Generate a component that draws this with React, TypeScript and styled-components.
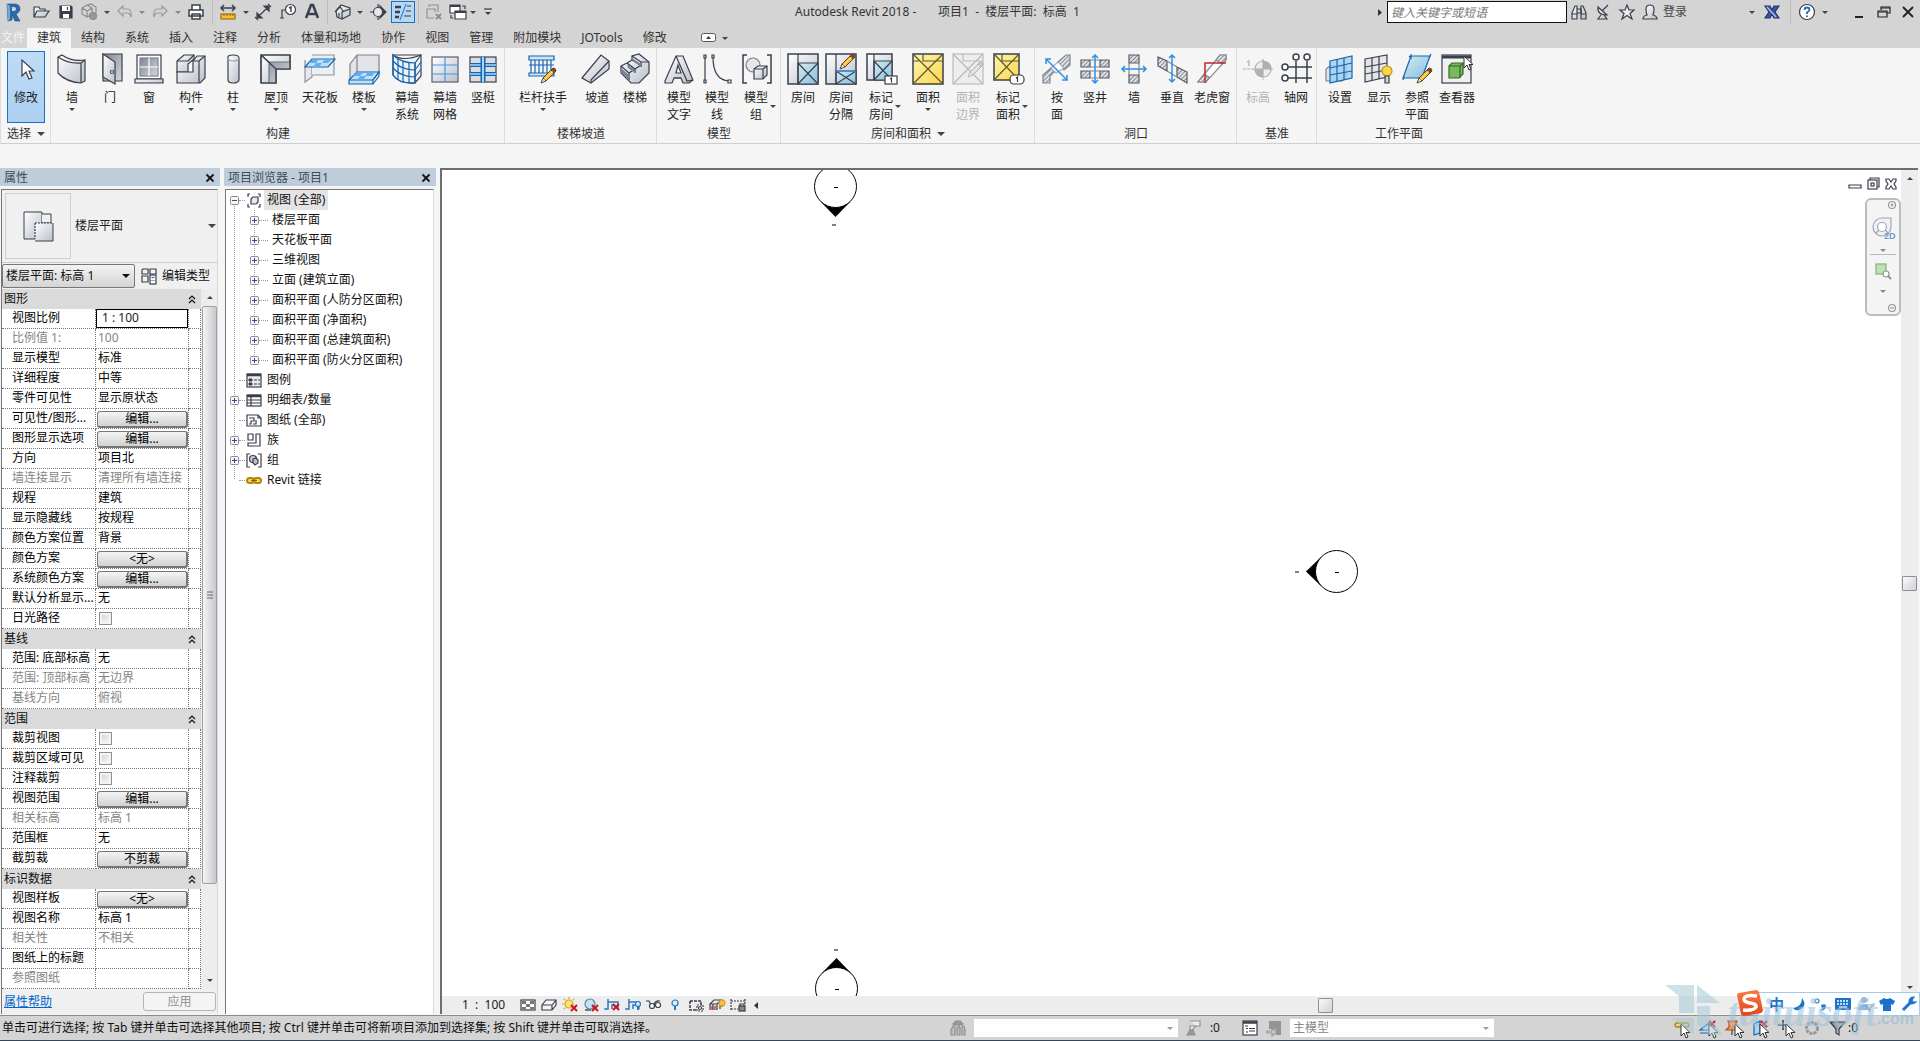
import React from "react";
import styled, { createGlobalStyle, css } from "styled-components";

const INK = "#3a3f4b";
const BLUE = "#1565b0";

const Global = createGlobalStyle`
  *, *::before, *::after { box-sizing: border-box; }
  html, body { margin: 0; padding: 0; }
  body, button, input, select, table {
    font-family: "Noto Sans", "Noto Sans CJK SC", sans-serif;
    font-size: 12px;
    line-height: 16px;
    color: #222;
  }
  button { background: none; border: 0; padding: 0; margin: 0; cursor: default; }
  ul { list-style: none; margin: 0; padding: 0; }
`;

const Window = styled.div`
  position: relative;
  display: flex;
  flex-direction: column;
  height: 100vh;
  overflow: hidden;
  background: #f5f5f5;
  border-bottom: 1px solid #33475c;
`;

/* ---------- shared drawing helpers ---------- */

const Svg = styled.svg`
  display: block;
  flex: none;
  overflow: visible;
`;

type IconProps = { size?: number; children: React.ReactNode };
const Icon = ({ size = 16, children }: IconProps) => (
  <Svg width={size} height={size} viewBox={`0 0 ${size} ${size}`} fill="none" stroke={INK} strokeWidth={1.2} aria-hidden="true">
    {children}
  </Svg>
);

const Caret = ({ color = "#444", size = 6 }: { color?: string; size?: number }) => (
  <Svg width={size} height={size / 2} viewBox="0 0 6 3" aria-hidden="true">
    <path d="M0 0H6L3 3Z" fill={color} />
  </Svg>
);

const Gradients = () => (
  <Svg width="0" height="0" aria-hidden="true">
    <defs>
      <linearGradient id="steel" x1="0" y1="0" x2="1" y2="1">
        <stop offset="0" stopColor="#ffffff" />
        <stop offset="1" stopColor="#b9bfca" />
      </linearGradient>
      <linearGradient id="dark" x1="0" y1="0" x2="1" y2="1">
        <stop offset="0" stopColor="#7d8492" />
        <stop offset="1" stopColor="#d5d8de" />
      </linearGradient>
      <linearGradient id="sky" x1="0" y1="0" x2="1" y2="1">
        <stop offset="0" stopColor="#d3ecf5" />
        <stop offset="1" stopColor="#86bfdb" />
      </linearGradient>
      <linearGradient id="gold" x1="0" y1="0" x2="1" y2="1">
        <stop offset="0" stopColor="#fff3b0" />
        <stop offset="1" stopColor="#fbd84c" />
      </linearGradient>
      <linearGradient id="orange" x1="0" y1="0" x2="0" y2="1">
        <stop offset="0" stopColor="#fb7a45" />
        <stop offset="1" stopColor="#e5421a" />
      </linearGradient>
      <pattern id="hatch" width="3" height="3" patternUnits="userSpaceOnUse" patternTransform="rotate(45)">
        <rect width="3" height="3" fill="#dfe1e5" />
        <path d="M0 0V3" stroke="#6d7480" strokeWidth="1.6" />
      </pattern>
    </defs>
  </Svg>
);

const Pencil = ({ x = 0, y = 0, grey = false }: { x?: number; y?: number; grey?: boolean }) => (
  <g transform={`translate(${x} ${y})`} strokeWidth="1" stroke={grey ? "#b5b5b5" : "#5b4a33"}>
    <path d="M0 15L2 10L5 13Z" fill={grey ? "#eee" : "#f3e0bf"} />
    <path d="M2 10L10 2L13 5L5 13Z" fill={grey ? "#ddd" : "#fbb929"} />
    <path d="M10 2L12 0Q15 0 15 3L13 5Z" fill={grey ? "#ccc" : "#8a4a1c"} />
    <path d="M3.500 11.500L11.500 3.500" stroke={grey ? "#eee" : "#ffe9a8"} />
  </g>
);

const Pointer = ({ x = 0, y = 0 }: { x?: number; y?: number }) => (
  <path transform={`translate(${x} ${y})`} d="M0 0V12L3 9L5 14L7 13L5 8.500H9Z" fill="#fff" stroke="#333" strokeWidth="1" />
);

const RedX = ({ x = 0, y = 0 }: { x?: number; y?: number }) => (
  <path transform={`translate(${x} ${y})`} d="M0 0L6 6M6 0L0 6" stroke="#c8141c" strokeWidth="2" />
);

/* ---------- title bar ---------- */

const TitleBar = styled.header`
  display: flex;
  align-items: center;
  flex: none;
  height: 24px;
  background: #d4d4d4;
`;

const BarButton = styled.button<{ $w: number; $on?: boolean }>`
  display: flex;
  align-items: center;
  justify-content: center;
  flex: none;
  width: ${(p) => p.$w}px;
  height: 22px;
  ${(p) => p.$on && css`
    background: #b7d7f3;
    border: 1px solid #1b6fc0;
  `}
`;

const BarDivider = styled.span<{ $w: number }>`
  flex: none;
  align-self: stretch;
  width: ${(p) => p.$w}px;
  background: linear-gradient(#bdbdbd, #bdbdbd) center / 1px 100% no-repeat;
`;

const WindowTitle = styled.h1`
  flex: 1;
  min-width: 0;
  margin: 0;
  font-size: 12px;
  font-weight: 400;
  line-height: 22px;
  text-align: center;
  white-space: pre;
  overflow: hidden;
  color: #333;
`;

const Search = styled.input`
  flex: none;
  width: 180px;
  height: 22px;
  margin-left: 3px;
  padding: 0 3px;
  border: 1px solid #111;
  background: #fff;
  font-style: italic;
  &::placeholder { color: #777; opacity: 1; }
`;

const LoginButton = styled.button`
  display: flex;
  align-items: center;
  gap: 5px;
  margin-right: 61px;
  padding-left: 3px;
  white-space: nowrap;
  color: #444;
`;

const WindowControls = styled.div`
  display: flex;
  margin-left: 18px;
`;

const qat: [string, number, React.ReactNode, boolean?][] = [
  ["Revit", 26, <Icon key="i"><path d="M2 0H9Q15 0 15 5Q15 8 11 10L15 17H10L7 11V16L3 17Z" fill="#2b6ca8" stroke="#174a7d" strokeWidth="0.600" /><path d="M7 3V7H9Q11 7 11 5Q11 3 9 3Z" fill="#d4d4d4" stroke="none" /><path d="M2 0L5 2V15L3 17Z" fill="#74abd6" stroke="none" /></Icon>],
  ["打开", 30, <Icon key="i"><path d="M1 13V3H6L7 5H12V7M1 13L4 7H16L12 13Z" fill="url(#steel)" /></Icon>],
  ["保存", 20, <Icon key="i"><path d="M2 2H13L14 3V14H2Z" fill={INK} /><path d="M4 2H12V7H4ZM5 10H11V14H5Z" fill="#fff" stroke="none" /><path d="M9.500 3V6" stroke={INK} /></Icon>],
  ["同步", 26, <Icon key="i"><g stroke="#8e8e8e"><path d="M1 4L6 1L11 4V10L6 13L1 10ZM1 4L6 7L11 4M6 7V13M6 1L10 0L15 3V9" /><circle cx="12" cy="12" r="3.500" fill="#999" /></g></Icon>],
  ["", 10, <Caret key="i" />],
  ["放弃", 26, <Icon key="i"><path d="M1 7L6 2V5H11Q15 6 14 13Q13 9 10 9H6V12Z" stroke="#9c9c9c" /></Icon>],
  ["", 8, <Caret key="i" color="#888" />],
  ["重做", 28, <Icon key="i"><path d="M15 7L10 2V5H5Q1 6 2 13Q3 9 6 9H10V12Z" stroke="#9c9c9c" /></Icon>],
  ["", 8, <Caret key="i" color="#888" />],
  ["打印", 28, <Icon key="i"><path d="M4 6V1H12V6M1 6H15V12H1ZM4 10H12V15H4Z" fill="#fff" strokeWidth="1.500" /></Icon>],
  ["|", 4, null],
  ["测量", 28, <Icon key="i"><path d="M1 4H15M4 1L1 4L4 7M12 1L15 4L12 7" strokeWidth="1.500" /><rect x="1" y="10" width="14" height="5" fill="#fbc02d" stroke="#9b7212" /><path d="M4 10V12M7 10V12M10 10V12M13 10V12" stroke="#9b7212" /></Icon>],
  ["", 8, <Caret key="i" />],
  ["对齐尺寸标注", 26, <Icon key="i"><path d="M3 13L13 3M2 9V14H7ZM14 7V2H9Z" fill={INK} /><path d="M0 13L3 16M13 0L16 3" /></Icon>],
  ["按类别标记", 24, <Icon key="i"><circle cx="10.500" cy="5.500" r="5" fill="#fff" /><path d="M9 4L11 3V8" strokeWidth="1.400" /><path d="M5.500 6H2V14M0 14H4" /></Icon>],
  ["文字", 24, <Icon key="i"><path d="M2 14L7 1H9L14 14M4 10H12" strokeWidth="2.500" /></Icon>],
  ["|", 6, null],
  ["三维视图", 26, <Icon key="i"><path d="M1 7L6 1L15 4L15 11L7 15L2 13Z" fill="url(#steel)" /><path d="M0 8L5 3L9 8M7 15V8L15 5M4 9V13" /></Icon>],
  ["", 8, <Caret key="i" />],
  ["剖面", 27, <Icon key="i"><path d="M10 2L16 8L10 14Z" fill={INK} /><circle cx="8" cy="8" r="4.500" fill="#e8e8e8" /><path d="M0 8H4M8 0V3M8 13V16" /></Icon>],
  ["细线", 24, <Icon key="i"><path d="M0 3H6M0 8H5M0 13H4" strokeWidth="2.500" /><path d="M11 0L5 16" stroke="#2a86d8" /><path d="M12 2H16M11 7H16M9 12H16" /></Icon>, true],
  ["|", 6, null],
  ["关闭隐藏窗口", 26, <Icon key="i"><g stroke="#909090"><path d="M3 3V1H12V8M1 10V5H9V8M1 5V14H8" /><path d="M10 10L15 15M15 10L10 15" strokeWidth="2" /></g></Icon>],
  ["切换窗口", 22, <Icon key="i"><path d="M0 1H10V9H0Z" fill="#fff" /><path d="M0 2H10" strokeWidth="2" /><path d="M5 7H16V15H5Z" fill="#fff" /><path d="M5 8H16" strokeWidth="2" /><path d="M12 2H15V5M1 11V14H3" /></Icon>],
  ["", 8, <Caret key="i" />],
  ["自定义", 22, <Icon key="i" size={8}><path d="M0 1H8" /><path d="M1 4H7L4 7Z" fill={INK} stroke="none" /></Icon>],
];

const TitleRow = () => (
  <TitleBar>
    {qat.map(([name, w, icon, on], i) =>
      name === "|" ? <BarDivider key={i} $w={w} /> : (
        <BarButton key={i} $w={w} $on={on} aria-label={name || "更多"}>{icon}</BarButton>
      )
    )}
    <WindowTitle>{"Autodesk Revit 2018 -       项目1  -  楼层平面:  标高  1"}</WindowTitle>
    <BarButton $w={8} aria-label="展开搜索"><Svg width="4" height="7" viewBox="0 0 4 7"><path d="M0 0L4 3.500L0 7Z" fill="#333" /></Svg></BarButton>
    <Search placeholder="键入关键字或短语" aria-label="搜索" />
    <BarButton $w={24} aria-label="查找"><Icon><path d="M1 15V9L4 2H6V15ZM15 15V9L12 2H10V15Z" fill="url(#steel)" /><path d="M6 5H10V9H6M1 10H6M10 10H15" /></Icon></BarButton>
    <BarButton $w={24} aria-label="通讯中心"><Icon><path d="M3 3Q2 11 12 11ZM7 7L13 1M6 11L3 15H12L9 11" fill="url(#steel)" /></Icon></BarButton>
    <BarButton $w={24} aria-label="收藏夹"><Icon><path d="M8 1L10 6H15L11 9.500L13 15L8 11.500L3 15L5 9.500L1 6H6Z" fill="#eee" /></Icon></BarButton>
    <LoginButton>
      <Icon><path d="M1 15Q1 12 5 11Q4 9 4 5Q4 1 8 1Q12 1 12 5Q12 9 11 11Q15 12 15 15Z" fill="url(#steel)" /></Icon>
      登录
    </LoginButton>
    <BarButton $w={8} aria-label="登录选项"><Caret /></BarButton>
    <BarButton $w={32} aria-label="Exchange"><Icon><path d="M1 2H6L8 6L10 2H15L11 8L15 14H10L8 10L6 14H1L5 8Z" fill="#3a56a6" stroke="#24366e" /><path d="M3 3L12 13" stroke="#b8c6ee" /></Icon></BarButton>
    <BarDivider $w={4} />
    <BarButton $w={30} aria-label="帮助"><Icon><circle cx="8" cy="8" r="7.500" fill="#fff" /><path d="M5.500 6Q5.500 3.500 8 3.500T10.500 6Q10.500 7 8 8.500V10M8 11.500V13" stroke="#2868b8" strokeWidth="1.800" /></Icon></BarButton>
    <BarButton $w={6} aria-label="帮助选项"><Caret /></BarButton>
    <WindowControls>
      <BarButton $w={26} aria-label="最小化"><Icon><path d="M4 13H12" strokeWidth="2" stroke="#222" /></Icon></BarButton>
      <BarButton $w={24} aria-label="还原"><Icon size={14}><g stroke="#222"><path d="M4 5V2H13V8H10M1 6H10V12H1Z" /><path d="M1 7H10M4 3H13" /></g></Icon></BarButton>
      <BarButton $w={24} aria-label="关闭"><Icon><path d="M3 3L13 13M13 3L3 13" stroke="#222" strokeWidth="1.800" /></Icon></BarButton>
    </WindowControls>
  </TitleBar>
);

/* ---------- ribbon tabs ---------- */

const TabBar = styled.nav`
  display: flex;
  align-items: flex-end;
  flex: none;
  height: 24px;
  background: #d4d4d4;
`;

const Tab = styled.button<{ $active?: boolean; $file?: boolean }>`
  height: 20px;
  padding: ${(p) => (p.$file ? "0 2px 0 1px" : "0 10px")};
  line-height: 20px;
  white-space: nowrap;
  color: ${(p) => (p.$file ? "#f4f4f4" : "#333")};
  background: ${(p) => (p.$active ? "#f5f5f5" : "none")};
`;

const TabToggle = styled.button`
  display: flex;
  align-items: center;
  gap: 5px;
  height: 20px;
  margin-left: 24px;
`;

const tabs = ["建筑", "结构", "系统", "插入", "注释", "分析", "体量和场地", "协作", "视图", "管理", "附加模块", "JOTools", "修改"];

/* ---------- ribbon ---------- */

const RibbonBar = styled.section`
  display: flex;
  flex: none;
  height: 96px;
  border-left: 1px solid #dcdcdc;
  border-bottom: 1px solid #cfcfcf;
`;

const Group = styled.div<{ $pad: number }>`
  display: flex;
  flex-direction: column;
  flex: none;
  padding: 3px ${(p) => p.$pad - 1}px 0 ${(p) => p.$pad}px;
  border-right: 1px solid #dcdcdc;
  &:last-child { border-right: 0; }
`;

const Tools = styled.div`
  display: flex;
  flex: 1;
`;

const GroupLabel = styled.div`
  display: flex;
  align-items: center;
  justify-content: center;
  gap: 6px;
  height: 19px;
  white-space: nowrap;
  color: #333;
`;

const Tool = styled.button<{ $w: number; $active?: boolean }>`
  display: flex;
  flex-direction: column;
  align-items: center;
  width: ${(p) => p.$w}px;
  height: 72px;
  padding-top: ${(p) => (p.$active ? 1 : 2)}px;
  ${(p) => p.$active && css`
    background: linear-gradient(#bfdcf7, #abcff0);
    border: 1px solid #1c70c2;
  `}
  &:disabled { color: #b4b4b4; }
`;

const ToolLabel = styled.span`
  display: flex;
  align-items: center;
  gap: 2px;
  margin: 4px 0 2px;
  line-height: 17px;
  white-space: nowrap;
`;

const SideCaret = styled.span`
  width: 0;
`;

const dashFrame = { strokeWidth: 1.5 };

const toolIcons: Record<string, React.ReactNode> = {
  modify: <><path d="M12 7V23L16 19L19 26L22 25L19 18H24Z" fill="#fff" /></>,
  wall: <><path d="M2 4L6 2Q16 9 29 7V28L25 30Q10 29 2 20Z" fill="url(#steel)" /><path d="M2 4Q12 11 25 10V30M25 10L29 7" /></>,
  door: <><path d="M9 1H28V28H9Z" fill="url(#dark)" /><path d="M9 1L21 9V31L9 24Z" fill="url(#steel)" /><circle cx="18" cy="19" r="1.500" fill="#fff" /></>,
  window: <><rect x="4" y="2" width="24" height="24" fill="#fff" /><rect x="7" y="5" width="18" height="18" fill="url(#dark)" stroke="#7d8492" /><path d="M16 5V23M7 14H25" stroke="#fff" /><path d="M2 26H30V30H2Z" fill="url(#steel)" /></>,
  component: <><path d="M2 8L9 2H19V6L13 11V19H2Z" fill="url(#steel)" /><path d="M2 19V30H25L30 25V3H22L18 8V19Z" fill="url(#steel)" /><path d="M18 8H24L30 3M24 8V30M2 8H13L19 2" /></>,
  column: <><path d="M11 5V27Q11 30 16 30T22 27V5Q22 2 16 2T11 5Z" fill="url(#steel)" /><path d="M11 5Q11 8 16 8T22 5" stroke="#9aa0ac" /></>,
  roof: <><path d="M1 2H30V16H16V30H1Z" fill="url(#steel)" /><path d="M1 2L9 9H30V16H16V30H9V9Z" fill="url(#dark)" stroke="#6c7380" /><path d="M1 2L16 16M1 2H30V16H16V30H1Z" /></>,
  ceiling: <><path d="M1 7V29L8 24V13" fill="#e5e7ea" stroke="#8d929b" /><path d="M8 2H30V22H8" stroke="#8d929b" fill="#eceef0" /><path d="M8 6H31L24 14H1Z" fill="#bfe0fb" stroke={BLUE} /><path d="M9 6H15L12 10H5ZM21 6H28L24 10H18ZM12 10H18L15 14H9Z" fill="#63aeea" stroke="none" /></>,
  floor: <><path d="M2 11L9 2H31V20H9L2 27Z" fill="#e2e4e8" stroke="#7d828c" /><path d="M9 2V20" stroke="#7d828c" /><path d="M1 27L9 19H31L25 27V31H1Z" fill="#bfe0fb" stroke={BLUE} /><path d="M1 27H25L31 19V23L25 31" stroke={BLUE} /><path d="M9 19H16L12 23H5ZM20 19H27L24 23H17ZM12 23H18L15 27H9Z" fill="#63aeea" stroke="none" /></>,
  curtain: <><path d="M2 2Q12 9 30 2V23L24 30Q8 31 2 22Z" fill="#eaf3fa" /><path d="M2 2H30M24 10L30 2M24 10V30" /><path d="M2 8Q10 17 24 17L30 9M2 15Q10 24 24 24L30 16M7 6V26M12 8V29M18 10V30" stroke={BLUE} /><path d="M2 2Q10 10 24 10V30Q8 31 2 22Z" stroke={BLUE} /></>,
  grid: <><rect x="3" y="4" width="26" height="25" fill="url(#steel)" stroke="#5a606c" /><path d="M16 4V29M3 12H29M3 21H29" stroke="#3d9af0" /></>,
  mullion: <><rect x="3" y="4" width="26" height="25" fill="#d9dde3" /><path d="M3 12H29M3 21H29" stroke={BLUE} strokeWidth="4" /><path d="M3 12H29M3 21H29" stroke="#a9d6f6" strokeWidth="1.500" /><path d="M16 4V29" stroke={BLUE} strokeWidth="5" /><path d="M16 4V29" stroke="#a9d6f6" strokeWidth="2" /></>,
  railing: <><g stroke={BLUE}><path d="M2 3H27V7H2ZM2 20H27V23H2Z" fill="#cde6fa" /><path d="M4 7V20M8 7V20M12 7V20M16 7V20M20 7V20M24 7V20M2 12H27" /></g><Pencil x={14} y={15} /></>,
  ramp: <><path d="M1 25L20 2L28 8V16L10 30Z" fill="url(#steel)" /><path d="M10 30L10 27L28 8" /></>,
  stair: <><path d="M2 13L8 10L13 7V3L20 1L30 9V20L20 30H12L2 20Z" fill="url(#steel)" /><path d="M2 13L10 20V27M8 10L16 16L10 20M13 7L22 12L16 16V20M13 3L22 9V14M22 9L30 9" /><path d="M2 15L10 22V27L2 20ZM8 11L16 17V20L9 15ZM13 5L22 11V14L14 8Z" fill="#7b8290" stroke="none" /></>,
  text: <><path d="M2 28L13 3H20L30 27L26 30H20L18 25H11L9 30H2Z" fill="url(#steel)" /><path d="M13 20L15 12L18 20Z" fill="#fff" /><path d="M13 3L24 28L30 27M11 25H18" /></>,
  line: <><path d="M4 4V28M12 4Q12 27 28 28" /><path d="M3 2H5V5H3ZM11 2H13V5H11ZM3 27H5V30H3ZM27 27H30V30H27Z" fill="#fff" /></>,
  group: <><path d="M6 2H2V30H6M26 2H30V30H26" {...dashFrame} /><circle cx="12" cy="12" r="7" fill="#e4e6ea" stroke="#777d89" /><path d="M13 16L17 13H26V22L22 26H13Z" fill="url(#steel)" /><path d="M13 16H22V26M22 16L26 13" /></>,
  room: <><rect x="1" y="1" width="30" height="30" fill="url(#steel)" {...dashFrame} /><path d="M11 10H31V31H11Z" fill="url(#sky)" /><path d="M11 1V31M11 10L31 31M31 10L11 31" /></>,
  roomSep: <><rect x="1" y="1" width="30" height="30" fill="url(#steel)" {...dashFrame} /><path d="M11 18H31V31H11Z" fill="url(#sky)" /><path d="M11 1V31M11 18L31 31M31 18L11 31" /><path d="M11 18H31" stroke="#2e8fe8" /><Pencil x={15} y={1} /></>,
  roomTag: <><rect x="1" y="1" width="25" height="26" fill="url(#steel)" {...dashFrame} /><path d="M8 8H26V27H8Z" fill="url(#sky)" /><path d="M8 1V27M8 8L26 27M26 8L8 27" /><rect x="19" y="23" width="12" height="8" fill="#fff" /><path d="M24 26L25.500 25V29.500" /></>,
  area: <><rect x="1" y="1" width="30" height="30" fill="url(#gold)" {...dashFrame} /><path d="M1 1L31 31M31 1L1 31M11 1V8H31M1 8H7" stroke="#5d572f" /></>,
  areaLine: <><g stroke="#b9b9b9"><rect x="1" y="1" width="30" height="30" fill="#ededed" /><path d="M1 1L31 31M31 1L1 31M11 1V8H31" /></g><Pencil x={16} y={9} grey /></>,
  areaTag: <><rect x="1" y="1" width="25" height="26" fill="url(#gold)" {...dashFrame} /><path d="M1 1L26 27M26 1L1 27M9 1V8H26" stroke="#5d572f" /><rect x="17" y="22" width="14" height="9" rx="4" fill="#fff" /><path d="M23 25.500L24.500 24V29" /></>,
  byFace: <><path d="M17 9L25 2H29V12L23 17ZM15 17L9 23V30H2V22L10 15Z" fill="url(#hatch)" stroke="#7d8492" /><path d="M17 9L10 15L15 20L23 15Z" fill="#fff" stroke="#aaa" /><path d="M5 6L26 27M5 11V6H10M26 22V27H21" stroke="#2e8fe8" strokeWidth="1.500" /></>,
  shaft: <><path d="M2 7H11V14H2ZM21 7H30V14H21ZM2 18H11V25H2ZM21 18H30V25H21Z" fill="url(#hatch)" stroke="#555b66" /><path d="M11 7H21M11 14H21M11 18H21M11 25H21" stroke="#888" /><path d="M16 2V30M13 5L16 2L19 5M13 27L16 30L19 27" stroke="#2e8fe8" strokeWidth="1.500" /></>,
  wallOpen: <><path d="M11 2H21V10H11ZM11 22H21V30H11Z" fill="url(#hatch)" stroke="#555b66" /><path d="M11 10V22M21 10V22" stroke="#888" /><path d="M4 16H28M7 13L4 16L7 19M25 13L28 16L25 19" stroke="#2e8fe8" strokeWidth="1.500" /></>,
  vertical: <><path d="M2 4L11 8V18L2 13ZM21 14L31 19V30L21 24Z" fill="url(#hatch)" stroke="#555b66" /><path d="M11 8L21 14M11 18L21 24" stroke="#888" /><path d="M16 2V29M13 5L16 2L19 5M13 26L16 29L19 26" stroke="#2e8fe8" strokeWidth="1.500" /></>,
  dormer: <><path d="M2 29L24 2H30V7L10 29Z" fill="#fff" stroke="#888" /><path d="M20 7L24 2H30V7L26 11ZM2 29L8 21L13 24L10 29Z" fill="url(#hatch)" stroke="#888" /><path d="M9 30V10H30" stroke="#c0282d" strokeWidth="1.500" /></>,
  level: <><g stroke="#b0b0b0"><path d="M1 16H31M21 6V27" strokeDasharray="3 1" /><circle cx="21" cy="16" r="8" fill="#eee" /><path d="M21 8A8 8 0 0 1 29 16H21ZM21 24A8 8 0 0 1 13 16H21Z" fill="#b0b0b0" /><path d="M5 9L7 8V13" /></g></>,
  axes: <><path d="M16 8V30M27 8V30M8 14H32M8 25H32" {...dashFrame} /><g fill="#fff" {...dashFrame}><circle cx="16" cy="4" r="3" /><circle cx="27" cy="4" r="3" /><circle cx="5" cy="14" r="3" /><circle cx="5" cy="25" r="3" /></g></>,
  set: <><path d="M2 16L6 13H22V25L18 28H2Z" fill="#dfe5ea" stroke="#7d8492" /><path d="M6 8L28 3V25L6 30Z" fill="#9fd0ef" fillOpacity="0.800" stroke={BLUE} /><path d="M13 6V28M20 5V27M6 15L28 10M6 22L28 18" stroke={BLUE} /></>,
  show: <><path d="M2 6L24 2V24L2 29Z" fill="#e3e5e9" /><path d="M9 5V27M16 4V26M2 14L24 10M2 21L24 17" /><circle cx="24" cy="18" r="5" fill="#fbd44c" stroke="#c79a15" /><path d="M22 23H26V30H22Z" fill="#cfd3da" /></>,
  refPlane: <><path d="M10 3H29L21 25H2Z" fill="url(#sky)" stroke={BLUE} /><path d="M10 1V5L8 3M30 1L28 5M2 27L3 23" stroke={BLUE} /><Pencil x={16} y={15} /></>,
  viewer: <><rect x="1" y="2" width="29" height="28" fill="#f0f0f0" /><path d="M1 4H30" strokeWidth="3" /><path d="M8 13L11 10H22V21L18 25H8Z" fill="#7bb661" stroke="#2f6b23" /><path d="M8 13H19V25M19 13L22 10" stroke="#2f6b23" /><Pointer x={23} y={3} /></>,
};

type ToolDef = { w: number; icon: string; label: string[]; menu?: "below" | "side"; off?: boolean };
type GroupDef = { name: string; pad: number; more?: boolean; tools: ToolDef[] };

const t = (w: number, icon: string, label: string, menu?: "below" | "side", off?: boolean): ToolDef => ({
  w, icon, label: label.split(" "), menu, off,
});

const groups: GroupDef[] = [
  { name: "构建", pad: 2, tools: [t(38, "wall", "墙", "below"), t(38, "door", "门"), t(40, "window", "窗"), t(44, "component", "构件", "below"), t(40, "column", "柱", "below"), t(46, "roof", "屋顶", "below"), t(42, "ceiling", "天花板"), t(46, "floor", "楼板", "below"), t(40, "curtain", "幕墙 系统"), t(36, "grid", "幕墙 网格"), t(40, "mullion", "竖梃")] },
  { name: "楼梯坡道", pad: 6, tools: [t(64, "railing", "栏杆扶手", "below"), t(44, "ramp", "坡道"), t(32, "stair", "楼梯")] },
  { name: "模型", pad: 2, tools: [t(40, "text", "模型 文字"), t(36, "line", "模型 线"), t(44, "group", "模型 组", "side")] },
  { name: "房间和面积", pad: 2, more: true, tools: [t(40, "room", "房间"), t(36, "roomSep", "房间 分隔"), t(46, "roomTag", "标记 房间", "side"), t(46, "area", "面积", "below"), t(34, "areaLine", "面积 边界", undefined, true), t(48, "areaTag", "标记 面积", "side")] },
  { name: "洞口", pad: 3, tools: [t(38, "byFace", "按 面"), t(38, "shaft", "竖井"), t(40, "wallOpen", "墙"), t(36, "vertical", "垂直"), t(44, "dormer", "老虎窗")] },
  { name: "基准", pad: 2, tools: [t(38, "level", "标高", undefined, true), t(38, "axes", "轴网")] },
  { name: "工作平面", pad: 3, tools: [t(40, "set", "设置"), t(38, "show", "显示"), t(38, "refPlane", "参照 平面"), t(42, "viewer", "查看器")] },
];

const Ribbon = () => (
  <RibbonBar>
    <Group $pad={6}>
      <Tools>
        <Tool $w={38} $active><Icon size={32}>{toolIcons.modify}</Icon><ToolLabel>修改</ToolLabel></Tool>
      </Tools>
      <GroupLabel>选择<Caret size={8} /></GroupLabel>
    </Group>
    {groups.map((g) => (
      <Group key={g.name} $pad={g.pad}>
        <Tools>
          {g.tools.map((x) => (
            <Tool key={x.icon} $w={x.w} disabled={x.off}>
              <Icon size={32}>{toolIcons[x.icon]}</Icon>
              <ToolLabel>
                <span>{x.label.map((l, i) => <React.Fragment key={l}>{i > 0 && <br />}{l}</React.Fragment>)}</span>
                {x.menu === "side" && <SideCaret><Caret /></SideCaret>}
              </ToolLabel>
              {x.menu === "below" && <Caret />}
            </Tool>
          ))}
        </Tools>
        <GroupLabel>{g.name}{g.more && <Caret size={8} />}</GroupLabel>
      </Group>
    ))}
  </RibbonBar>
);

/* ---------- workspace ---------- */

const Workspace = styled.main`
  display: flex;
  flex: 1;
  min-height: 0;
  padding-top: 24px;
  padding-bottom: 1px;
`;

const Dock = styled.section<{ $w: number }>`
  display: flex;
  flex-direction: column;
  flex: none;
  width: ${(p) => p.$w}px;
  margin-right: 4px;
`;

const DockTitle = styled.h2`
  display: flex;
  align-items: center;
  justify-content: space-between;
  flex: none;
  height: 18px;
  margin: 0 0 3px;
  padding: 1px 5px 0 4px;
  background: #bfcddb;
  font-size: 12px;
  font-weight: 400;
  color: #3f4a57;
`;

const CloseButton = styled.button`
  width: 10px;
  height: 10px;
`;

const CloseX = () => (
  <CloseButton aria-label="关闭"><Icon size={10}><path d="M1.500 1.500L8.500 8.500M8.500 1.500L1.500 8.500" stroke="#111" strokeWidth="1.800" /></Icon></CloseButton>
);

const DockBody = styled.div<{ $white?: boolean }>`
  display: flex;
  flex-direction: column;
  flex: 1;
  min-height: 0;
  margin: 0 2px 0 1px;
  border-left: 1px solid #777;
  border-top: 1px solid #777;
  border-right: 1px solid #d8d8d8;
  background: ${(p) => (p.$white ? "#fff" : "#f0f0f0")};
`;

const TypeSelector = styled.button`
  display: flex;
  align-items: center;
  flex: none;
  height: 73px;
  padding: 3px 1px 3px 3px;
  border-bottom: 1px solid #ccc;
`;

const Thumb = styled.span`
  display: flex;
  align-items: center;
  justify-content: center;
  width: 66px;
  height: 66px;
  border: 1px solid #cfcfcf;
`;

const TypeName = styled.span`
  flex: 1;
  padding-left: 4px;
  text-align: left;
`;

const FilterRow = styled.div`
  display: flex;
  align-items: center;
  flex: none;
  height: 26px;
`;

const SelectBox = styled.label<{ $w: number; $h: number; $skin?: "raised" | "flat" }>`
  display: grid;
  grid-template-columns: 1fr 16px;
  align-items: center;
  justify-items: center;
  flex: none;
  width: ${(p) => p.$w}px;
  height: ${(p) => p.$h}px;
  ${(p) => p.$skin === "raised"
    ? css`
        border: 1px solid #777;
        border-radius: 2px;
        background: linear-gradient(#f3f3f3, #d4d4d4);
      `
    : css`
        background: #fff;
      `}
`;

const PlainSelect = styled.select<{ $muted?: boolean }>`
  grid-area: 1 / 1 / 2 / 3;
  width: 100%;
  height: 100%;
  padding: 0 0 0 3px;
  border: 0;
  background: none;
  appearance: none;
  color: ${(p) => (p.$muted ? "#888" : "#111")};
  opacity: 1;
`;

const SelectArrow = styled.span`
  grid-area: 1 / 2 / 2 / 3;
  pointer-events: none;
`;

const EditType = styled.button`
  display: flex;
  align-items: center;
  gap: 5px;
  margin-left: 6px;
  color: #111;
  white-space: nowrap;
`;

const GridArea = styled.div`
  display: flex;
  flex: 1;
  min-height: 0;
  overflow: hidden;
  background: #fff;
`;

const PropTable = styled.table`
  flex: none;
  align-self: flex-start;
  width: 199px;
  border-collapse: separate;
  border-spacing: 0;
  table-layout: fixed;
`;

const Category = styled.th`
  height: 20px;
  padding: 0 4px 0 2px;
  background: #dadada;
  font-weight: 400;
  text-align: left;
`;

const CategoryLine = styled.div`
  display: flex;
  align-items: center;
  justify-content: space-between;
  color: #111;
`;

const cell = css`
  height: 20px;
  padding: 0 0 1px 2px;
  border-right: 1px dotted #777;
  border-bottom: 1px dotted #777;
  line-height: 16px;
  text-align: left;
  font-weight: 400;
  white-space: nowrap;
  overflow: hidden;
  text-overflow: ellipsis;
`;

const NameCell = styled.th<{ $muted?: boolean }>`
  ${cell}
  padding-left: 10px;
  color: ${(p) => (p.$muted ? "#858585" : "#000")};
`;

const ValueCell = styled.td<{ $muted?: boolean; $control?: boolean }>`
  ${cell}
  ${(p) => p.$control && css`
    padding: 0;
  `}
  color: ${(p) => (p.$muted ? "#858585" : "#000")};
`;

const ScaleInput = styled.input`
  display: block;
  width: 100%;
  height: 19px;
  padding: 0 5px 2px;
  border: 1px solid #000;
  color: #222;
`;

const CellButton = styled.button`
  display: block;
  width: calc(100% - 1px);
  height: 17px;
  margin: 1px 0 0 1px;
  border: 1px solid #777;
  border-right-width: 2px;
  border-bottom-width: 2px;
  border-radius: 3px;
  background: linear-gradient(#f4f4f4, #d2d2d2);
  line-height: 14px;
  color: #000;
`;

const Check = styled.input`
  display: block;
  width: 13px;
  height: 13px;
  margin: 1px 0 0 1px;
  appearance: none;
  border: 1px solid #8e8f8f;
  background: linear-gradient(135deg, #c9ced6, #fff);
  box-shadow: inset 0 0 0 2px #f4f4f4;
`;

const ScrollColumn = styled.div<{ $w: number }>`
  display: flex;
  flex-direction: column;
  align-items: center;
  flex: none;
  width: ${(p) => p.$w}px;
  background: #ededed;
`;

const ScrollButton = styled.button`
  display: flex;
  align-items: center;
  justify-content: center;
  flex: none;
  width: 16px;
  height: 17px;
`;

const PropThumb = styled.div`
  display: flex;
  align-items: center;
  justify-content: center;
  flex: 578;
  width: 15px;
  border: 1px solid #a0a0a0;
  border-radius: 2px;
  background: linear-gradient(90deg, #f4f4f4, #c6c9ce);
`;

const ThumbRest = styled.div`
  flex: 88;
`;

const DockFooter = styled.div`
  display: flex;
  align-items: center;
  justify-content: space-between;
  flex: none;
  height: 25px;
  padding: 0 1px 0 2px;
`;

const HelpLink = styled.a`
  color: #0066cc;
`;

const ApplyButton = styled.button`
  width: 73px;
  height: 19px;
  border: 1px solid #b4b4b4;
  border-radius: 3px;
  background: #f4f4f4;
  &:disabled { color: #909090; }
`;

type PropKind = "text" | "button" | "check" | "scale";
type Prop = [string, string, PropKind?, boolean?];

const sections: { title: string; rows: Prop[] }[] = [
  {
    title: "图形",
    rows: [
      ["视图比例", "1 : 100", "scale"],
      ["比例值 1:", "100", "text", true],
      ["显示模型", "标准"],
      ["详细程度", "中等"],
      ["零件可见性", "显示原状态"],
      ["可见性/图形...", "编辑...", "button"],
      ["图形显示选项", "编辑...", "button"],
      ["方向", "项目北"],
      ["墙连接显示", "清理所有墙连接", "text", true],
      ["规程", "建筑"],
      ["显示隐藏线", "按规程"],
      ["颜色方案位置", "背景"],
      ["颜色方案", "<无>", "button"],
      ["系统颜色方案", "编辑...", "button"],
      ["默认分析显示...", "无"],
      ["日光路径", "", "check"],
    ],
  },
  { title: "基线", rows: [["范围: 底部标高", "无"], ["范围: 顶部标高", "无边界", "text", true], ["基线方向", "俯视", "text", true]] },
  {
    title: "范围",
    rows: [
      ["裁剪视图", "", "check"],
      ["裁剪区域可见", "", "check"],
      ["注释裁剪", "", "check"],
      ["视图范围", "编辑...", "button"],
      ["相关标高", "标高 1", "text", true],
      ["范围框", "无"],
      ["截剪裁", "不剪裁", "button"],
    ],
  },
  {
    title: "标识数据",
    rows: [
      ["视图样板", "<无>", "button"],
      ["视图名称", "标高 1"],
      ["相关性", "不相关", "text", true],
      ["图纸上的标题", ""],
      ["参照图纸", "", "text", true],
    ],
  },
];

const PropValue = ({ name, value, kind }: { name: string; value: string; kind: PropKind }) => {
  if (kind === "button") return <CellButton aria-label={`${name} ${value}`}>{value}</CellButton>;
  if (kind === "check") return <Check type="checkbox" aria-label={name} />;
  if (kind === "scale") return <ScaleInput defaultValue={value} aria-label={name} />;
  return <>{value}</>;
};

const ArrowUp = () => <Svg width="6" height="3" viewBox="0 0 6 3"><path d="M0 3H6L3 0Z" fill="#444" /></Svg>;

const Properties = () => (
  <Dock $w={220}>
    <DockTitle>属性 <CloseX /></DockTitle>
    <DockBody>
      <TypeSelector>
        <Thumb>
          <Icon size={32}><path d="M2 2H20V29H2Z" fill="url(#steel)" strokeWidth="1" /><path d="M20 4H29V13H20" fill="#eef0f3" strokeWidth="1" /><path d="M13 13H31V31H13Z" fill="url(#steel)" stroke="none" /><path d="M13 13H31" strokeDasharray="2 1" /><path d="M13 13V29" strokeDasharray="2 1" /><path d="M31 13V31H13" strokeWidth="1" /></Icon>
        </Thumb>
        <TypeName>楼层平面</TypeName>
        <Caret size={8} />
      </TypeSelector>
      <FilterRow>
        <SelectBox $w={133} $h={24} $skin="raised">
          <PlainSelect aria-label="实例过滤器"><option>楼层平面: 标高 1</option></PlainSelect>
          <SelectArrow><Caret size={8} color="#111" /></SelectArrow>
        </SelectBox>
        <EditType>
          <Icon><path d="M2 1H7V6H1V2ZM9 1H15V6H9ZM1 8H7V14H1Z" fill="#f0f2f5" /><rect x="9" y="7" width="6" height="9" fill="#fff" /><path d="M10.500 9.500H13.500" stroke="#2a6ec0" /><path d="M10.500 12.500H13.500" strokeDasharray="1 1" /></Icon>
          编辑类型
        </EditType>
      </FilterRow>
      <GridArea>
        <PropTable>
          <colgroup><col width="94" /><col width="93" /><col width="12" /></colgroup>
          {sections.map((s) => (
            <tbody key={s.title}>
              <tr>
                <Category colSpan={3}>
                  <CategoryLine>
                    {s.title}
                    <button aria-label={`折叠 ${s.title}`}><Icon size={10}><path d="M2 5L5 2L8 5M2 9L5 6L8 9" stroke="#111" /></Icon></button>
                  </CategoryLine>
                </Category>
              </tr>
              {s.rows.map(([name, value, kind = "text", muted]) => (
                <tr key={name}>
                  <NameCell scope="row" $muted={muted}>{name}</NameCell>
                  <ValueCell $muted={muted} $control={kind === "button" || kind === "scale"}>
                    <PropValue name={name} value={value} kind={kind} />
                  </ValueCell>
                  <ValueCell />
                </tr>
              ))}
            </tbody>
          ))}
        </PropTable>
        <ScrollColumn $w={17}>
          <ScrollButton aria-label="向上滚动"><ArrowUp /></ScrollButton>
          <PropThumb><Icon size={8}><path d="M1 1H7M1 4H7M1 7H7" stroke="#666" strokeWidth="1" /></Icon></PropThumb>
          <ThumbRest />
          <ScrollButton aria-label="向下滚动"><Caret /></ScrollButton>
        </ScrollColumn>
      </GridArea>
      <DockFooter>
        <HelpLink href="#help">属性帮助</HelpLink>
        <ApplyButton disabled>应用</ApplyButton>
      </DockFooter>
    </DockBody>
  </Dock>
);

/* ---------- project browser ---------- */

const Tree = styled.ul<{ $inset: number }>`
  background: repeating-linear-gradient(#999 0 1px, #fff 1px 2px) ${(p) => p.$inset + 4}px ${(p) => (p.$inset > 10 ? 0 : 10)}px / 1px calc(100% - ${(p) => (p.$inset > 10 ? 10 : 20)}px) no-repeat;
`;

const TreeRow = styled.div<{ $inset: number }>`
  display: flex;
  align-items: center;
  height: 20px;
  padding-left: ${(p) => p.$inset}px;
  white-space: nowrap;
  color: #111;
`;

const Expander = styled.button<{ $hidden?: boolean }>`
  flex: none;
  width: 9px;
  height: 9px;
  visibility: ${(p) => (p.$hidden ? "hidden" : "visible")};
`;

const Connector = styled.span<{ $w: number }>`
  flex: none;
  width: ${(p) => p.$w}px;
  margin-right: 1px;
  border-top: 1px dotted #999;
`;

const TreeLabel = styled.span<{ $selected?: boolean; $iconGap?: boolean }>`
  margin-left: ${(p) => (p.$iconGap ? 2 : 0)}px;
  padding: 0 3px;
  line-height: 20px;
  background: ${(p) => (p.$selected ? "#e4e4e4" : "none")};
`;

const Toggle = ({ mark, name }: { mark?: "+" | "-"; name: string }) => (
  <Expander $hidden={!mark} aria-label={`展开 ${name}`}>
    <Svg width="9" height="9" viewBox="0 0 9 9">
      <rect x="0.500" y="0.500" width="8" height="8" rx="1" fill="#f6f6f6" stroke="#8d8d8d" />
      <path d={mark === "+" ? "M2 4.500H7M4.500 2V7" : "M2 4.500H7"} stroke="#2f4b9a" />
    </Svg>
  </Expander>
);

const viewKinds = ["楼层平面", "天花板平面", "三维视图", "立面 (建筑立面)", "面积平面 (人防分区面积)", "面积平面 (净面积)", "面积平面 (总建筑面积)", "面积平面 (防火分区面积)"];

const treeNodes: { name: string; mark?: "+" | "-"; icon: React.ReactNode; children?: string[] }[] = [
  { name: "视图 (全部)", mark: "-", children: viewKinds, icon: <><path d="M4 2H2V5M12 2H14V5M4 15H2V12M12 15H14V12" /><path d="M5 7L7 5H12V10L10 12H5Z" fill="#e6e9ee" /></> },
  { name: "图例", icon: <><rect x="1" y="2" width="14" height="13" fill="#e9ebee" /><path d="M1 3H15" strokeWidth="2.500" /><path d="M3 7H6V9H3ZM3 11H6V13H3Z" fill={INK} stroke={INK} strokeWidth="1" /><path d="M8 8H14M8 12H14" strokeDasharray="3 1" /></> },
  { name: "明细表/数量", mark: "+", icon: <><rect x="1" y="3" width="14" height="11" fill="#fff" /><path d="M1 4H15" strokeWidth="2.500" /><path d="M1 8H15M1 11H15M5 4V14" /></> },
  { name: "图纸 (全部)", icon: <><path d="M1 3H12L15 6V14H1Z" fill="#fff" /><path d="M12 3V6H15M3 6H8V9H5V12H3M10 8V12H7" /></> },
  { name: "族", mark: "+", icon: <><path d="M2 2H7V8H2ZM10 2H14V14H2V11H10Z" fill="#fff" /></> },
  { name: "组", mark: "+", icon: <><path d="M4 2H1V15H4M12 2H15V15H12" /><circle cx="7" cy="7" r="3.500" fill="#ccd0d6" /><path d="M7 7L10 6L12 8V11L9 13L7 11Z" fill="#bcc1c9" /></> },
  { name: "Revit 链接", icon: <><g stroke="#b38610" strokeWidth="2"><rect x="1" y="6" width="7" height="5" rx="2.500" fill="#fbd84c" /><rect x="8" y="6" width="7" height="5" rx="2.500" fill="#fbd84c" /></g><path d="M5 8.500H11" stroke="#805f08" /></> },
];

const Browser = () => (
  <Dock $w={212}>
    <DockTitle>项目浏览器 - 项目1 <CloseX /></DockTitle>
    <DockBody $white>
      <Tree $inset={4}>
        {treeNodes.map((n) => (
          <li key={n.name}>
            <TreeRow $inset={4}>
              <Toggle mark={n.mark} name={n.name} />
              <Connector $w={6} />
              <Icon>{n.icon}</Icon>
              <TreeLabel $iconGap $selected={n.mark === "-"}>{n.name}</TreeLabel>
            </TreeRow>
            {n.children && (
              <Tree $inset={24}>
                {n.children.map((c) => (
                  <li key={c}>
                    <TreeRow $inset={24}>
                      <Toggle mark="+" name={c} />
                      <Connector $w={9} />
                      <TreeLabel>{c}</TreeLabel>
                    </TreeRow>
                  </li>
                ))}
              </Tree>
            )}
          </li>
        ))}
      </Tree>
    </DockBody>
  </Dock>
);

/* ---------- drawing area ---------- */

const ViewFrame = styled.section`
  display: flex;
  flex-direction: column;
  flex: 1;
  min-width: 0;
  margin-right: 2px;
  border-top: 2px solid #6e6e6e;
  border-left: 2px solid #6e6e6e;
`;

const ViewRow = styled.div`
  display: flex;
  flex: 1;
  min-height: 0;
`;

const Canvas = styled.div`
  position: relative;
  flex: 1;
  min-width: 0;
  overflow: hidden;
  background: #fff;
`;

const Marker = styled.svg<{ $x: number; $y: number }>`
  position: absolute;
  left: ${(p) => p.$x}px;
  top: ${(p) => p.$y}px;
  overflow: visible;
`;

const ViewButtons = styled.div`
  position: absolute;
  top: 6px;
  right: 2px;
  display: flex;
  gap: 2px;
`;

const NavBar = styled.div`
  position: absolute;
  top: 28px;
  right: 0;
  display: flex;
  flex-direction: column;
  align-items: center;
  width: 36px;
  height: 118px;
  border: 2px solid #bcbcbc;
  border-radius: 6px;
  background: #f4f4f4;
`;

const NavButton = styled.button<{ $h: number; $end?: boolean }>`
  display: flex;
  align-items: center;
  justify-content: center;
  align-self: ${(p) => (p.$end ? "flex-end" : "center")};
  width: ${(p) => (p.$end ? 14 : 28)}px;
  height: ${(p) => p.$h}px;
`;

const NavRule = styled.span`
  width: 26px;
  height: 1px;
  background: #bbb;
`;

const NavText = styled.text`
  font: bold 9px "Liberation Sans", sans-serif;
`;

const Thumbnail = styled.div`
  flex: none;
  width: 15px;
  height: 15px;
  border: 1px solid #909090;
  border-radius: 1px;
  background: linear-gradient(135deg, #fafafa, #cfd1d6);
`;

const ScrollSpace = styled.div`
  flex: 1;
`;

const ViewBar = styled.div`
  display: flex;
  align-items: center;
  flex: none;
  height: 18px;
  background: #ededed;
`;

const ScaleButton = styled.button`
  flex: none;
  width: 75px;
  height: 18px;
  padding-left: 20px;
  text-align: left;
  white-space: pre;
`;

const ViewTool = styled.button`
  display: flex;
  justify-content: center;
  flex: none;
  width: 21px;
`;

const CropShape = (
  <g stroke="#2b78bd"><path d="M1 12H4V5H14V12M4 5V2M8 12V8H11" strokeWidth="1.500" /><path d="M0 12H2" /></g>
);

const viewTools: [string, React.ReactNode][] = [
  ["详细程度", <><rect x="1" y="3" width="14" height="10" fill="#fff" /><path d="M2 4H6V7H2ZM10 4H14V7H10ZM6 7H10V10H6ZM2 10H6V12H2ZM10 10H14V12H10Z" fill="#777" stroke="none" /></>],
  ["视觉样式", <><path d="M1 8L5 3H15V8L11 13H1ZM1 8H11V13M11 8L15 3" fill="#f6f6f6" /></>],
  ["日光路径", <><circle cx="7" cy="7" r="4" fill="#fde27a" stroke="#d9a41a" /><path d="M7 0V2M0 7H2M2 2L3 3M12 2L11 3M2 12L3 11" stroke="#d9a41a" /><RedX x={9} y={8} /></>],
  ["阴影", <><circle cx="7" cy="7" r="5" fill="#c4e1f4" stroke="#5189b8" /><path d="M2 13H8" stroke="#777" strokeWidth="2" /><RedX x={9} y={8} /></>],
  ["裁剪视图", <>{CropShape}<RedX x={9} y={7} /></>],
  ["显示裁剪区域", <>{CropShape}<circle cx="13" cy="7" r="2.500" fill="#d6ecfb" stroke="#2b78bd" /><path d="M13 10V13" stroke="#2b78bd" strokeWidth="2" /></>],
  ["临时隐藏/隔离", <><path d="M0 4H3L5 8M8 8Q9 3 14 4" /><circle cx="6" cy="9" r="2.500" fill="#fff" /><circle cx="12" cy="8" r="2.500" fill="#fff" /></>],
  ["显示隐藏的图元", <><circle cx="8" cy="6" r="3" fill="#d6ecfb" stroke="#2b78bd" /><path d="M8 9V13" stroke="#2b78bd" strokeWidth="2" /></>],
  ["临时视图属性", <><path d="M2 4H13V8M2 4V13H8" strokeDasharray="3 1" strokeWidth="1.500" /><rect x="9" y="8" width="6" height="6" fill="#fff" strokeDasharray="2 1" /><circle cx="12" cy="11" r="1.500" /></>],
  ["分析模型", <><path d="M1 13V7L5 3H13V10M4 13V7M8 13V7H1M8 7L12 3M11 12V5" /><path d="M3 13V9M6 13V9" stroke="#c8141c" /><circle cx="13" cy="6" r="3" fill="#fbbf3a" stroke="#d9a41a" /></>],
  ["显示约束", <><path d="M1 2V14M15 2V7M1 4H15M1 12H8" strokeDasharray="2 1" /><rect x="9" y="9" width="6" height="5" fill="#888" /><path d="M10 9V7H14V9" /></>],
];

const circlePath = "M21.500 0.500A21 21 0 1 0 21.500 42.500A21 21 0 1 0 21.500 0.500Z";

const Elevation = ({ x, y, turn, dash }: { x: number; y: number; turn: number; dash: [number, number] }) => (
  <Marker $x={x} $y={y} width="43" height="43" viewBox="0 0 43 43" fill="none" aria-hidden="true">
    <g transform={`rotate(${turn} 21.500 21.500)`}>
      <path d="M6 36L21.500 52L37 36Q21.500 48 6 36Z" fill="#000" />
    </g>
    <path d={circlePath} fill="#fff" stroke="#000" />
    <path d={`M20 22.500H24M${dash[0]} ${dash[1]}h4`} stroke="#000" />
  </Marker>
);

const DrawingArea = () => (
  <ViewFrame>
    <ViewRow>
      <Canvas>
        <Elevation x={372} y={-5} turn={0} dash={[18, 60]} />
        <Elevation x={873} y={380} turn={90} dash={[-20, 22]} />
        <Elevation x={373} y={797} turn={180} dash={[19, -17]} />
        <ViewButtons>
          <button aria-label="最小化视图"><Icon><path d="M2 9H14V12H2Z" fill="#fff" /></Icon></button>
          <button aria-label="还原视图"><Icon><path d="M5 4V2H14V11H12" /><rect x="3" y="4" width="9" height="9" fill="#fff" /><rect x="6" y="7" width="3" height="3" /></Icon></button>
          <button aria-label="关闭视图"><Icon><path d="M3 3H6L8 6L10 3H13V5L11 8L13 11V13H10L8 10L6 13H3V11L5 8L3 5Z" fill="#fff" /></Icon></button>
        </ViewButtons>
        <NavBar>
          <NavButton $h={10} $end aria-label="关闭导航栏"><Icon size={8}><circle cx="4" cy="4" r="3.500" stroke="#999" /><path d="M3 3L5 5M5 3L3 5" stroke="#999" /></Icon></NavButton>
          <NavButton $h={36} aria-label="控制盘">
            <Icon size={24}><g stroke="#a2a8b2"><path d="M11 2H20V11A9 9 0 1 1 11 2Z" fill="#eef0f3" /><circle cx="11" cy="11" r="4.500" fill="#fff" /><path d="M8 14L5 17M14 14L17 17" /></g><NavText x="13" y="23" fill="#6e9ccc" stroke="none">2D</NavText></Icon>
          </NavButton>
          <NavButton $h={8} aria-label="控制盘选项"><Caret color="#888" /></NavButton>
          <NavRule />
          <NavButton $h={32} aria-label="缩放"><Icon><rect x="1" y="1" width="10" height="10" fill="#bfe0b4" stroke="#84b476" /><circle cx="11" cy="11" r="3" fill="#fff" stroke="#8a94a0" /><path d="M13 13L16 16" stroke="#8a94a0" strokeWidth="2" /></Icon></NavButton>
          <NavButton $h={8} aria-label="缩放选项"><Caret color="#888" /></NavButton>
          <ScrollSpace />
          <NavButton $h={12} $end aria-label="自定义导航栏"><Icon size={8}><circle cx="4" cy="4" r="3.500" stroke="#999" /><path d="M2 4H6" stroke="#999" /></Icon></NavButton>
        </NavBar>
      </Canvas>
      <ScrollColumn $w={17}>
        <ScrollButton aria-label="向上滚动"><ArrowUp /></ScrollButton>
        <ScrollSpace />
        <Thumbnail />
        <ScrollSpace />
        <ScrollButton aria-label="向下滚动"><Caret /></ScrollButton>
      </ScrollColumn>
    </ViewRow>
    <ViewBar>
      <ScaleButton>{"1  :  100"}</ScaleButton>
      {viewTools.map(([name, icon]) => (
        <ViewTool key={name} aria-label={name}><Icon>{icon}</Icon></ViewTool>
      ))}
      <ScrollButton aria-label="向左滚动"><Svg width="4" height="7" viewBox="0 0 4 7"><path d="M4 0L0 3.500L4 7Z" fill="#333" /></Svg></ScrollButton>
      <ScrollSpace />
      <Thumbnail />
      <ScrollSpace />
      <ScrollButton aria-label="向右滚动" />
      <ScrollButton aria-hidden="true" tabIndex={-1} />
    </ViewBar>
  </ViewFrame>
);

/* ---------- status bar ---------- */

const StatusBar = styled.footer`
  display: flex;
  align-items: center;
  flex: none;
  height: 25px;
  border-top: 1px solid #8c8c8c;
  background: #d4d4d4;
  white-space: nowrap;
`;

const Hint = styled.p`
  flex: 1;
  min-width: 0;
  margin: 0;
  padding-left: 2px;
  overflow: hidden;
  color: #111;
`;

const StatusGroup = styled.div`
  display: flex;
  align-items: center;
  flex: none;
  gap: 8px;
`;

const StatusIcons = styled(StatusGroup)`
  gap: 10px;
  width: 426px;
  padding-left: 180px;
`;

const Count = styled.span`
  margin-left: -8px;
  color: #111;
`;

const StatusGap = styled.span`
  width: 6px;
`;

const Status = () => (
  <StatusBar>
    <Hint>单击可进行选择; 按 Tab 键并单击可选择其他项目; 按 Ctrl 键并单击可将新项目添加到选择集; 按 Shift 键并单击可取消选择。</Hint>
    <StatusGroup>
      <Icon><g stroke="#8f8f8f" fill="#bdbdbd"><path d="M1 15V10L3 6H5V15ZM7 15V8L9 6L10 8V15ZM12 15V6H14L15 10V15Z" /><path d="M3 4L6 1H10L13 4L10 5H6Z" fill="#999" /></g></Icon>
      <SelectBox $w={204} $h={18}>
        <PlainSelect $muted aria-label="活动工作集"><option></option></PlainSelect>
        <SelectArrow><Caret color="#999" /></SelectArrow>
      </SelectBox>
      <Icon><g stroke="#8f8f8f"><path d="M4 1H14V6H10L6 10H4V6H10" fill="#eee" /><path d="M1 15L4 10H7L9 15Z" fill="#999" /></g></Icon>
      <span>:0</span>
      <StatusGap />
      <Icon><rect x="1" y="1" width="14" height="14" fill="#fff" /><path d="M1 2.500H15" strokeWidth="2.500" /><path d="M3 6H6M7 8.500H13M7 11H13M4 8.500H6M4 12H6" /></Icon>
      <Icon><path d="M3 1H15V15H10V9H3Z" fill="#949494" stroke="none" /><path d="M1 11H6V8L11 12L6 16V13H1Z" fill="#ccc" stroke="#999" /></Icon>
      <SelectBox $w={204} $h={18}>
        <PlainSelect $muted aria-label="设计选项"><option>主模型</option></PlainSelect>
        <SelectArrow><Caret color="#999" /></SelectArrow>
      </SelectBox>
    </StatusGroup>
    <StatusIcons>
      <Icon><g stroke="#c4930f" strokeWidth="1.800"><rect x="1" y="3" width="7" height="4" rx="2" /><rect x="8" y="3" width="7" height="4" rx="2" /></g><Pointer x={7} y={4} /></Icon>
      <Icon><path d="M0 10L9 3V10ZM0 13H10" fill="#c9e4f6" stroke={BLUE} /><RedX x={9} y={1} /><Pointer x={9} y={4} /></Icon>
      <Icon><path d="M2 1H11L10 3V7L13 10H0L3 7V3Z" fill="#f2935c" stroke="#b4521e" /><path d="M6 10V15" /><Pointer x={9} y={4} /></Icon>
      <Icon><path d="M2 4L8 1V13L2 15Z" fill="#a9d4f2" stroke={BLUE} /><RedX x={9} y={1} /><Pointer x={8} y={4} /></Icon>
      <Icon><path d="M5 0V10M0 5H10M4 1H6M4 9H6M1 4V6M9 4V6" /><Pointer x={8} y={4} /></Icon>
      <Icon><circle cx="8" cy="8" r="5.500" stroke="#979797" strokeWidth="3" strokeDasharray="3 1" /></Icon>
      <Icon><path d="M0 2H15L9 9V15L6 13V9Z" fill="url(#dark)" /></Icon>
      <Count>:0</Count>
    </StatusIcons>
  </StatusBar>
);

/* ---------- floating input-method bar and site mark ---------- */

const ImeBar = styled.div`
  position: absolute;
  right: 0;
  bottom: 24px;
  display: flex;
  align-items: center;
  gap: 6px;
  width: 162px;
  height: 24px;
  padding-left: 10px;
  border: 1px solid #a9c9e8;
  background: #fbfdff;
`;

const ImeLogo = styled.div`
  position: absolute;
  right: 156px;
  bottom: 23px;
`;

const ImeMode = styled.span`
  width: 16px;
  font-size: 15px;
  font-weight: 700;
  line-height: 20px;
  color: #1a73c9;
`;

const SiteMark = styled.div`
  position: absolute;
  right: 6px;
  bottom: 4px;
  display: flex;
  align-items: flex-end;
  opacity: 0.55;
  pointer-events: none;
`;

const SiteName = styled.span`
  margin-left: 3px;
  font: italic 700 40px/46px "Liberation Serif", serif;
  color: #9fc3da;
`;

const SiteSuffix = styled.span`
  padding-bottom: 8px;
  font: 700 16px/18px "Liberation Sans", sans-serif;
  color: #8fb8d4;
`;

const Ime = () => (
  <>
    <ImeBar>
      <ImeMode>中</ImeMode>
      <Icon><path d="M11 2Q17 10 8 14Q4 15 2 12Q11 11 11 2Z" fill="#1a73c9" stroke="none" /></Icon>
      <Icon><circle cx="4" cy="5" r="2" stroke="#1a73c9" /><path d="M9 9H12Q13 13 9 14Q11 12 9 11Z" fill="#1a73c9" stroke="#1a73c9" /></Icon>
      <Icon><rect x="0" y="2" width="16" height="12" rx="1" fill="#1a73c9" stroke="none" /><path d="M2 5H14M2 8H14" stroke="#fff" strokeWidth="1.600" strokeDasharray="2 1" /><path d="M4 11H12" stroke="#fff" /></Icon>
      <Icon><circle cx="7" cy="4" r="3" fill="#8fb3d8" stroke="none" /><path d="M1 14Q1 8 7 8T13 14Z" fill="#8fb3d8" stroke="none" /><path d="M9 9H16L13 12V15H12V12Z" fill="#fff" stroke="#7da5cf" /></Icon>
      <Icon><path d="M5 2Q8 4 11 2L16 5L14 9L12 8V15H4V8L2 9L0 5Z" fill="#1a73c9" stroke="none" /></Icon>
      <Icon><path d="M2 14L9 7" stroke="#1a73c9" strokeWidth="3" /><path d="M13 1Q8 1 8 6Q10 10 15 6L12 6L11 4Z" fill="#1a73c9" stroke="#1a73c9" /></Icon>
    </ImeBar>
    <SiteMark>
      <Svg width="60" height="52" viewBox="0 0 60 52"><path d="M0 1H29V29H14V12ZM32 1L55 19H32ZM32 22H45V34L58 51H45L32 40ZM6 34H29V51Z" fill="#a6cbd6" /></Svg>
      <SiteName>tuituisoft</SiteName>
      <SiteSuffix>.com</SiteSuffix>
    </SiteMark>
    <ImeLogo>
      <Icon size={28}><path d="M1 6Q1 4 3 4L20 1Q22 1 23 3L27 21Q27 23 25 24L8 27Q6 27 5 25Z" fill="url(#orange)" stroke="none" /><path d="M21 7Q9 5 8 10Q8 13 14 14Q21 15 20 18Q18 22 7 21" stroke="#fff" strokeWidth="3.500" /></Icon>
    </ImeLogo>
  </>
);

export default function App() {
  return (
    <Window>
      <Global />
      <TitleRow />
      <TabBar>
        <Tab $file>文件</Tab>
        {tabs.map((name) => <Tab key={name} $active={name === "建筑"}>{name}</Tab>)}
        <TabToggle aria-label="最小化功能区">
          <Svg width="16" height="10" viewBox="0 0 16 10"><rect x="0.500" y="0.500" width="14" height="8" rx="2" fill="#fff" stroke="#555" /><path d="M5 6H10L7.500 3Z" fill="#333" /></Svg>
          <Caret />
        </TabToggle>
      </TabBar>
      <Ribbon />
      <Workspace>
        <Properties />
        <Browser />
        <DrawingArea />
      </Workspace>
      <Status />
      <Ime />
      <Gradients />
    </Window>
  );
}
